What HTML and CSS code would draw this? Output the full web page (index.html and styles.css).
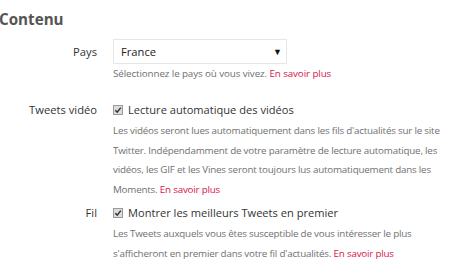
FILE: index.html
```html
<!DOCTYPE html>
<html lang="fr">
<head>
<meta charset="utf-8">
<link rel="stylesheet" href="styles.css">
</head>
<body>
<h2 class="title">Contenu</h2>
<div class="row row-country">
  <div class="label label-select">Pays</div>
  <div class="control">
    <div class="select"><span>France</span><span class="arrow">▼</span></div>
    <p class="help">Sélectionnez le pays où vous vivez. <a class="link" href="#">En savoir plus</a></p>
  </div>
</div>
<div class="row row-video">
  <div class="label">Tweets vidéo</div>
  <div class="control">
    <label class="check"><svg class="box" width="10" height="10" viewBox="0 0 10 10"><rect x="0.5" y="0.5" width="9" height="9" fill="#dcdcdc" stroke="#9a9a9a"/><path d="M2.3 5.2 L4.2 7.1 L7.8 2.6" fill="none" stroke="#333" stroke-width="1.5"/></svg><span>Lecture automatique des vidéos</span></label>
    <p class="help">Les vidéos seront lues automatiquement dans les fils d'actualités sur le site<br>Twitter. Indépendamment de votre paramètre de lecture automatique, les<br>vidéos, les GIF et les Vines seront toujours lus automatiquement dans les<br>Moments. <a class="link" href="#">En savoir plus</a></p>
  </div>
</div>
<div class="row row-feed">
  <div class="label">Fil</div>
  <div class="control">
    <label class="check"><svg class="box" width="10" height="10" viewBox="0 0 10 10"><rect x="0.5" y="0.5" width="9" height="9" fill="#dcdcdc" stroke="#9a9a9a"/><path d="M2.3 5.2 L4.2 7.1 L7.8 2.6" fill="none" stroke="#333" stroke-width="1.5"/></svg><span>Montrer les meilleurs Tweets en premier</span></label>
    <p class="help">Les Tweets auxquels vous êtes susceptible de vous intéresser le plus<br>s'afficheront en premier dans votre fil d'actualités. <a class="link" href="#">En savoir plus</a></p>
  </div>
</div>
</body>
</html>
```
FILE: styles.css
```css
html, body {
  margin: 0;
  padding: 0;
  background: #fff;
}
body {
  font-family: "Open Sans", "Noto Sans", sans-serif;
  color: #333;
  width: 468px;
  height: 263px;
  overflow: hidden;
}
.title {
  margin: 9px 0 0 -1px;
  font-size: 15.2px;
  line-height: 20px;
  font-weight: 700;
  color: #555;
}
.row {
  display: grid;
  grid-template-columns: 97px 1fr;
  column-gap: 16px;
}
.row-country { margin-top: 10px; }
.row-video { margin-top: 16px; }
.row-feed { margin-top: 4px; }
.label {
  text-align: right;
  font-size: 11.2px;
  line-height: 20px;
  color: #333;
}
.label-select {
  line-height: 25px;
}
.control {
  min-width: 0;
}
.select {
  box-sizing: border-box;
  width: 174px;
  height: 25px;
  border: 1px solid #e6e6e6;
  display: flex;
  align-items: center;
  justify-content: space-between;
  padding: 0 4px 0 7px;
  font-size: 11.2px;
  color: #222;
}
.arrow {
  font-size: 9px;
  color: #111;
}
.help {
  margin: 0;
  font-size: 9.8px;
  letter-spacing: -0.2px;
  line-height: 19.5px;
  color: #707070;
  white-space: nowrap;
}
.row-country .help { line-height: 20px; letter-spacing: -0.1px; }
.row-video .help, .row-feed .help { margin-top: 1px; }
.link {
  color: #d9134a;
  text-decoration: none;
}
.check {
  display: flex;
  align-items: center;
  gap: 5px;
  font-size: 11.1px;
  line-height: 20px;
  color: #333;
}
.box {
  flex: none;
}
```
